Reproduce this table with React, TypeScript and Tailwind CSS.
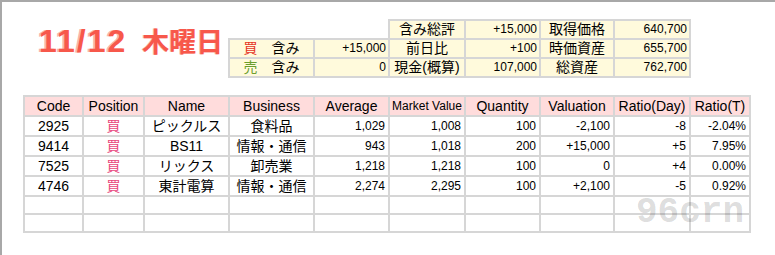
const FONT = { fontFamily: '"Liberation Sans", "Noto Sans CJK JP", sans-serif' };

type Row = {
  code: string;
  name: string;
  business: string;
  average: string;
  market: string;
  quantity: string;
  valuation: string;
  ratioDay: string;
  ratioT: string;
};

const rows: Row[] = [
  { code: '2925', name: 'ピックルス', business: '食料品', average: '1,029', market: '1,008', quantity: '100', valuation: '-2,100', ratioDay: '-8', ratioT: '-2.04%' },
  { code: '9414', name: 'BS11', business: '情報・通信', average: '943', market: '1,018', quantity: '200', valuation: '+15,000', ratioDay: '+5', ratioT: '7.95%' },
  { code: '7525', name: 'リックス', business: '卸売業', average: '1,218', market: '1,218', quantity: '100', valuation: '0', ratioDay: '+4', ratioT: '0.00%' },
  { code: '4746', name: '東計電算', business: '情報・通信', average: '2,274', market: '2,295', quantity: '100', valuation: '+2,100', ratioDay: '-5', ratioT: '0.92%' },
];

const headers = ['Code', 'Position', 'Name', 'Business', 'Average', 'Market Value', 'Quantity', 'Valuation', 'Ratio(Day)', 'Ratio(T)'];

function Cell({ children, num = false }: { children?: React.ReactNode; num?: boolean }) {
  return (
    <div
      className={
        num
          ? 'bg-white h-[18px] leading-[18px] text-[12px] text-right pr-[3px] text-black'
          : 'bg-white h-[18px] leading-[18px] text-[14px] text-center text-black'
      }
    >
      {children}
    </div>
  );
}

function SumCell({ children, num = false }: { children?: React.ReactNode; num?: boolean }) {
  return (
    <div
      className={
        num
          ? 'bg-[#fffadc] h-[17px] leading-[17px] text-[12px] text-right pr-[2px] text-black'
          : 'bg-[#fffadc] h-[17px] leading-[17px] text-[14px] text-center text-black'
      }
    >
      {children}
    </div>
  );
}

export default function App() {
  return (
    <div
      className="relative w-[775px] h-[255px] overflow-hidden bg-white border-t-2 border-l-2 border-[#a8a8a8] pl-[21px] pt-[17px]"
      style={FONT}
    >
      {/* Header: date + summary */}
      <div className="flex items-start">
        <div className="w-[205px] pl-[16px] mt-[6px] flex items-baseline leading-[32px] text-[#f7584b] whitespace-nowrap">
          <span className="text-[32px] font-bold tracking-[2px] [text-shadow:-2px_0_0_#fbb3ab]">11/12</span>
          <span
            className="ml-[15px] text-[27px] font-bold [text-shadow:-1px_0_0_#fbb3ab]"
            style={{ fontFamily: '"Noto Sans CJK JP", sans-serif' }}
          >
            木曜日
          </span>
        </div>

        <div className="flex items-end">
          <div className="grid grid-cols-[83px_73px] gap-[2px] p-[2px] pr-0 bg-[#d6d6d6]">
            <SumCell>
              <span className="text-[#e5331f]">買</span>　含み
            </SumCell>
            <SumCell num>+15,000</SumCell>
            <SumCell>
              <span className="text-[#6b9e2c]">売</span>　含み
            </SumCell>
            <SumCell num>0</SumCell>
          </div>
          <div className="grid grid-cols-[74px_73px_72px_74px] gap-[2px] p-[2px] bg-[#d6d6d6]">
            <SumCell>含み総評</SumCell>
            <SumCell num>+15,000</SumCell>
            <SumCell>取得価格</SumCell>
            <SumCell num>640,700</SumCell>
            <SumCell>前日比</SumCell>
            <SumCell num>+100</SumCell>
            <SumCell>時価資産</SumCell>
            <SumCell num>655,700</SumCell>
            <SumCell>現金(概算)</SumCell>
            <SumCell num>107,000</SumCell>
            <SumCell>総資産</SumCell>
            <SumCell num>762,700</SumCell>
          </div>
        </div>
      </div>

      {/* Positions table */}
      <div className="mt-[17px] w-fit grid grid-cols-[57px_59px_83px_83px_73px_74px_73px_72px_74px_58px] gap-[2px] p-[2px] bg-[#d6d6d6]">
        {headers.map((h) => (
          <div
            key={h}
            className={
              h === 'Market Value'
                ? 'bg-[#ffdcdc] h-[18px] leading-[18px] text-[12px] text-center text-black whitespace-nowrap'
                : 'bg-[#ffdcdc] h-[18px] leading-[18px] text-[14px] text-center text-black whitespace-nowrap'
            }
          >
            {h}
          </div>
        ))}
        {rows.map((r) => (
          <div key={r.code} className="contents">
            <Cell>{r.code}</Cell>
            <Cell>
              <span className="text-[#e8467c]">買</span>
            </Cell>
            <Cell>{r.name}</Cell>
            <Cell>{r.business}</Cell>
            <Cell num>{r.average}</Cell>
            <Cell num>{r.market}</Cell>
            <Cell num>{r.quantity}</Cell>
            <Cell num>{r.valuation}</Cell>
            <Cell num>{r.ratioDay}</Cell>
            <Cell num>{r.ratioT}</Cell>
          </div>
        ))}
        {[0, 1].map((i) =>
          headers.map((h) => <div key={`${i}-${h}`} className="bg-white h-[16px]" />)
        )}
      </div>

      {/* Watermark */}
      <div
        className="absolute left-[634px] top-[197px] text-[36px] font-bold leading-[28px] text-black/15 select-none pointer-events-none"
        style={{ fontFamily: '"Liberation Mono", monospace' }}
      >
        96crn
      </div>
    </div>
  );
}
